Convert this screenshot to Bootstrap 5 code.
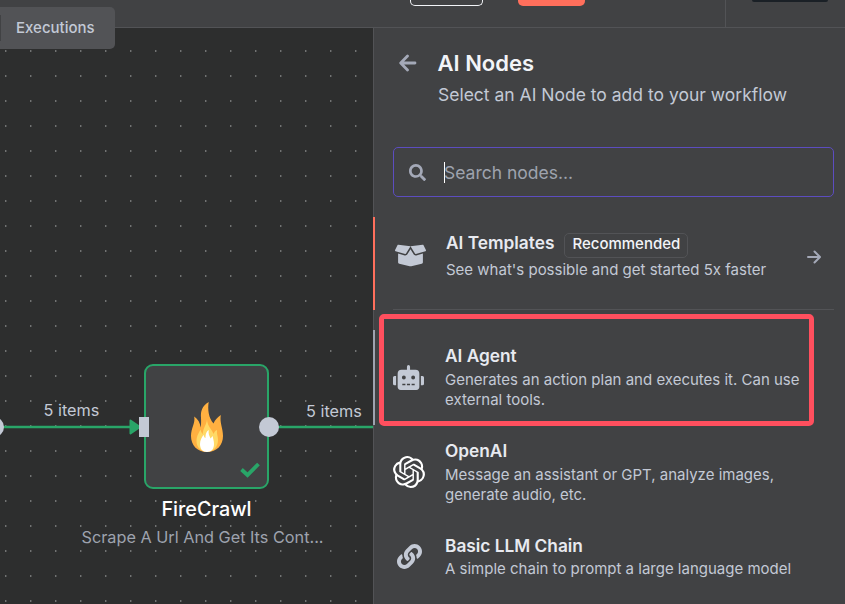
<!DOCTYPE html>
<html lang="en" data-bs-theme="dark">
<head>
<meta charset="utf-8">
<meta name="viewport" content="width=device-width, initial-scale=1">
<title>AI Nodes</title>
<link href="https://cdn.jsdelivr.net/npm/bootstrap@5.3.0/dist/css/bootstrap.min.css" rel="stylesheet">
<style>
body{width:845px;height:604px;overflow:hidden;background:#414244;color:#c3c9d5;font-family:Inter,"Liberation Sans",sans-serif;font-size:15px;line-height:20px}
svg{display:block;flex:none}
.topbar{height:28px;border-bottom:1px solid #525356;padding-left:410px}
.ghost-btn{width:73px;height:6px;border:1px solid #f2f4f8;border-top:0;border-radius:0 0 5px 5px;margin-right:35px}
.save-btn{width:67px;height:6px;background:#ff6f5c;border-radius:0 0 5px 5px;margin-right:140px}
.bar-rule{width:1px;background:#525356;margin-right:26px}
.star-btn{width:76px;height:2px;background:#1a2026;border-radius:0 0 3px 3px}
.tab-exec{left:0;top:7px;width:115px;height:42px;background:#525356;border-radius:0 5px 5px 0;padding-left:16px;font-size:15px;font-weight:500;z-index:3}
.tab-exec::before{content:"";position:absolute;left:0;top:8px;width:1px;height:26px;background:#414244}
.canvas{width:373px;background:#2d2e2e}
.canvas svg{left:0;top:0}
.edge-label{font-size:16.25px;line-height:20px}
.label-in{left:43.500px;top:372px}
.label-out{left:306px;top:373px}
.node-name{left:82px;top:469px;width:249px;font-size:19.8px;font-weight:500;line-height:24px;color:#fff}
.node-sub{left:81.500px;top:499px;font-size:16.25px;line-height:20px;color:#9ea3ae;white-space:nowrap}
.panel{border-left:1px solid #525356;background:#414244}
.panel-head{padding:21px 0 0 24px;height:119px;gap:21px}
.panel-head svg{margin:5px 0 0 1px}
.head-title{font-size:22px;font-weight:600;line-height:28px;color:#f2f4f8;margin-left:-.5px}
.head-sub{font-size:17.5px;line-height:24px;margin-top:6px}
.search-box{margin:0 11px 0 19px;height:50px;border:1px solid #5c4dc0;border-radius:5px;padding-left:15px;font-size:17.5px;color:#9ea3ae}
.search-text{margin:2px 0 0 -1px}
.caret{width:1px;height:21px;background:#fff;margin-left:18px}
.tpl{height:93px;margin-top:20px;margin-left:-1px;border-left:2px solid #ff6f5c;padding:0 24px 0 20px}
.tpl-body{padding:15px 0 0 20px}
.item-title{font-size:17.3px;font-weight:600;line-height:22px;color:#e8eaf0}
.tag{height:25px;margin-top:1px;border:1px solid #525356;border-radius:5px;padding:0 7px;line-height:20px;font-weight:500;color:#f2f4f8;margin-left:10px}
.tpl-desc{line-height:20px;margin-top:2px}
.rule{height:1px;background:#525356;margin:-1px 11px 0 19px}
.entry{height:95px;padding-left:19px;gap:20px}
.entry-body{padding-top:15px}
.entry-text{margin-top:3px}
.agent{margin-top:20px;margin-left:-1px;border-left:2px solid #9ea3b0;padding-left:18px}
.chain{height:80px;gap:19px}
.chain .entry-text{margin-top:2px}
.ic-box{margin-top:26px}
.ic-next{margin-top:33px}
.ic-robot{margin:35px 1px 0 0}
.ic-openai{margin-top:31px}
.ic-link{margin:24px 4px 0 4px}
.highlight{left:379px;top:314px;width:435px;height:112px;border:5px solid #ff4f5e;border-radius:5px;z-index:4}
</style>
</head>
<body class="position-relative d-flex flex-column">
<header class="topbar d-flex flex-shrink-0">
  <div class="ghost-btn"></div><div class="save-btn"></div><div class="bar-rule"></div><div class="star-btn"></div>
</header>
<div class="tab-exec position-absolute d-flex align-items-center">Executions</div>
<div class="d-flex flex-grow-1">
  <main class="canvas position-relative flex-shrink-0 overflow-hidden">
    <svg class="position-absolute" width="373" height="576" viewBox="0 28 373 576">
      <defs><pattern id="dots" x="5" y="50" width="25" height="25" patternUnits="userSpaceOnUse"><rect width="1" height="2" fill="#717373"/><rect x="1" width="1" height="2" fill="#4a4b4b"/></pattern></defs>
      <rect y="28" width="373" height="576" fill="url(#dots)"/>
      <path d="M0 427H131M278 427H373" stroke="#29a568" stroke-width="2.5"/>
      <rect x="145" y="365" width="123" height="123" rx="8" fill="#414244" stroke="#29a568" stroke-width="2"/>
      <path d="M130.500 420.500 140 427 130.500 433.500Z" fill="#29a568" stroke="#29a568" stroke-width="2" stroke-linejoin="round"/>
      <rect x="139" y="417" width="10" height="20" fill="#c3c9d5"/>
      <circle cx="269" cy="427" r="10" fill="#c3c9d5"/><circle cx="-6" cy="427" r="10" fill="#c3c9d5"/>
      <path d="M208.700 402C202 406 200.500 411 201 418C201.200 422 201.200 425 200.500 427.500C200.300 423 198 419 194.200 416.500C195.500 423 191 428 191 436C191 445 197 452 207 452C217 452 223 445 223 436C223 428 219.500 423 220.800 415C217 417.500 215 420 213.500 423.500C208.500 418 207.500 409 208.700 402Z" fill="#ffb041"/>
      <path d="M207 419.500C206.500 425 203 428 202.700 434C201.500 433 201 431 200.500 429.500C199.500 432 196.500 435.500 196.500 441C196.500 447 200.500 451.500 207 451.500C213.500 451.500 218 447 218 440C218 436 216.500 434 217 430C215 431 214 432.500 213.500 434C212 429 207.500 427 207 419.500Z" fill="#ffd966"/>
      <path d="M208.800 430C206 431.500 205.500 435 205.500 438C204 437.500 203.800 436 203.700 434.800C202 437 200 440 200 444C200 449 202.500 452 207 452C211.500 452 214 449 214 444C214 441 213 438.500 212.700 436L210.500 438.500C209.500 436 208 433.500 208.800 430Z" fill="#fff"/>
      <path d="M241.500 469.500 247.500 475 258.500 464" fill="none" stroke="#29a568" stroke-width="3.800"/>
    </svg>
    <div class="edge-label label-in position-absolute">5 items</div>
    <div class="edge-label label-out position-absolute">5 items</div>
    <div class="node-name position-absolute text-center">FireCrawl</div>
    <div class="node-sub position-absolute">Scrape A Url And Get Its Cont...</div>
  </main>
  <aside class="panel flex-grow-1">
    <div class="panel-head d-flex">
      <svg width="18" height="18" viewBox="0 0 18 18" fill="none" stroke="#a4a9b8" stroke-width="2.800" stroke-linecap="round"><path d="M8.500 2 1.700 9 8.500 16M2 9H16" stroke-linejoin="round"/></svg>
      <div><h1 class="head-title mb-0">AI Nodes</h1><p class="head-sub mb-0">Select an AI Node to add to your workflow</p></div>
    </div>
    <div class="search-box d-flex align-items-center">
      <svg width="17" height="17" viewBox="0 0 512 512" fill="#a4a9b8"><path d="M505 442.700L405.300 343c-4.500-4.500-10.600-7-17-7H372c27.600-35.300 44-79.700 44-128C416 93.100 322.900 0 208 0S0 93.100 0 208s93.100 208 208 208c48.300 0 92.700-16.400 128-44v16.300c0 6.400 2.500 12.500 7 17l99.700 99.700c9.400 9.400 24.600 9.400 33.900 0l28.300-28.300c9.400-9.400 9.400-24.600.1-34zM208 336c-70.700 0-128-57.200-128-128 0-70.700 57.200-128 128-128 70.700 0 128 57.200 128 128 0 70.700-57.200 128-128 128z"/></svg>
      <span class="caret"></span><span class="search-text">Search nodes...</span>
    </div>
    <div class="tpl d-flex">
      <svg class="ic-box" width="31" height="25" viewBox="0 0 640 512" fill="#c3c9d5"><path d="M425.700 256c-16.900 0-32.800-9-41.400-23.400L320 126l-64.200 106.600c-8.700 14.500-24.600 23.500-41.500 23.500-4.500 0-9-.6-13.300-1.900L64 215v178c0 14.700 10 27.500 24.200 31l216.200 54.100c10.200 2.500 20.900 2.500 31 0L551.800 424c14.200-3.600 24.200-16.400 24.200-31V215l-137 39.100c-4.300 1.300-8.800 1.900-13.300 1.900zm212.600-112.200L586.800 41c-3.100-6.200-9.800-9.800-16.700-8.900L320 64l91.700 152.100c3.800 6.300 11.400 9.300 18.500 7.300l197.900-56.500c9.900-2.900 14.700-13.900 10.200-23.100zM53.200 41L1.700 143.800c-4.600 9.200.3 20.200 10.100 23l197.900 56.500c7.100 2 14.700-1 18.500-7.300L320 64 69.800 32.100c-6.900-.8-13.500 2.700-16.600 8.900z"/></svg>
      <div class="tpl-body flex-grow-1">
        <div class="d-flex"><div class="item-title">AI Templates</div><span class="tag">Recommended</span></div>
        <div class="tpl-desc">See what's possible and get started 5x faster</div>
      </div>
      <svg class="ic-next" width="14" height="14" viewBox="0 0 14 14" fill="none" stroke="#a4a9b8" stroke-width="2" stroke-linecap="round" stroke-linejoin="round"><path d="M1 7H12.500M7.500 1.500 13 7 7.500 12.500"/></svg>
    </div>
    <div class="rule"></div>
    <div class="entry agent d-flex">
      <svg class="ic-robot" width="31" height="25" viewBox="0 0 640 512" fill="#c3c9d5"><path d="M32,224H64V416H32A32,32,0,0,1,0,384V256A32,32,0,0,1,32,224Zm512-48V448a64,64,0,0,1-64,64H160a64,64,0,0,1-64-64V176a80,80,0,0,1,80-80H288V32a32,32,0,0,1,64,0V96H464A80,80,0,0,1,544,176ZM264,256a40,40,0,1,0-40,40A40,40,0,0,0,264,256Zm-8,128H192v32h64Zm96,0H288v32h64ZM456,256a40,40,0,1,0-40,40A40,40,0,0,0,456,256Zm-8,128H384v32h64ZM640,256V384a32,32,0,0,1-32,32H576V224h32A32,32,0,0,1,640,256Z"/></svg>
      <div class="entry-body"><div class="item-title">AI Agent</div><div class="entry-text">Generates an action plan and executes it. Can use<br>external tools.</div></div>
    </div>
    <div class="entry d-flex">
      <svg class="ic-openai" width="32" height="32" viewBox="0 0 24 24" fill="#fff"><path d="M22.2819 9.8211a5.9847 5.9847 0 0 0-.5157-4.9108 6.0462 6.0462 0 0 0-6.5098-2.9A6.0651 6.0651 0 0 0 4.9807 4.1818a5.9847 5.9847 0 0 0-3.9977 2.9 6.0462 6.0462 0 0 0 .7427 7.0966 5.98 5.98 0 0 0 .511 4.9107 6.051 6.051 0 0 0 6.5146 2.9001A5.9847 5.9847 0 0 0 13.2599 24a6.0557 6.0557 0 0 0 5.7718-4.2058 5.9894 5.9894 0 0 0 3.9977-2.9001 6.0557 6.0557 0 0 0-.7475-7.0729zm-9.022 12.6081a4.4755 4.4755 0 0 1-2.8764-1.0408l.1419-.0804 4.7783-2.7582a.7948.7948 0 0 0 .3927-.6813v-6.7369l2.02 1.1686a.071.071 0 0 1 .038.052v5.5826a4.504 4.504 0 0 1-4.4945 4.4944zm-9.6607-4.1254a4.4708 4.4708 0 0 1-.5346-3.0137l.142.0852 4.783 2.7582a.7712.7712 0 0 0 .7806 0l5.8428-3.3685v2.3324a.0804.0804 0 0 1-.0332.0615L9.74 19.9502a4.4992 4.4992 0 0 1-6.1408-1.6464zM2.3408 7.8956a4.485 4.485 0 0 1 2.3655-1.9728V11.6a.7664.7664 0 0 0 .3879.6765l5.8144 3.3543-2.0201 1.1685a.0757.0757 0 0 1-.071 0l-4.8303-2.7865A4.504 4.504 0 0 1 2.3408 7.872zm16.5963 3.8558L13.1038 8.364 15.1192 7.2a.0757.0757 0 0 1 .071 0l4.8303 2.7913a4.4944 4.4944 0 0 1-.6765 8.1042v-5.6772a.79.79 0 0 0-.407-.667zm2.0107-3.0231l-.142-.0852-4.7735-2.7818a.7759.7759 0 0 0-.7854 0L9.409 9.2297V6.8974a.0662.0662 0 0 1 .0284-.0615l4.8303-2.7866a4.4992 4.4992 0 0 1 6.6802 4.66zM8.3065 12.863l-2.02-1.1638a.0804.0804 0 0 1-.038-.0567V6.0742a4.4992 4.4992 0 0 1 7.3757-3.4537l-.142.0805L8.704 5.459a.7948.7948 0 0 0-.3927.6813zm1.0976-2.3654l2.602-1.4998 2.6069 1.4998v2.9994l-2.5974 1.4997-2.6067-1.4997Z"/></svg>
      <div class="entry-body"><div class="item-title">OpenAI</div><div class="entry-text">Message an assistant or GPT, analyze images,<br>generate audio, etc.</div></div>
    </div>
    <div class="entry chain d-flex">
      <svg class="ic-link" width="25" height="25" viewBox="0 0 512 512" fill="#c3c9d5"><path d="M326.612 185.391c59.747 59.809 58.927 155.698.36 214.590-.11.12-.24.25-.36.37l-67.200 67.200c-59.270 59.270-155.699 59.262-214.960 0-59.270-59.260-59.270-155.700 0-214.960l37.106-37.106c9.840-9.840 26.786-3.300 27.294 10.606.648 17.722 3.826 35.527 9.690 52.721 1.986 5.822.567 12.262-3.783 16.612l-13.087 13.087c-28.026 28.026-28.905 73.660-1.155 101.960 28.024 28.579 74.086 28.749 102.325.51l67.200-67.190c28.191-28.191 28.073-73.757 0-101.830-3.701-3.694-7.429-6.564-10.341-8.569a16.037 16.037 0 0 1-6.947-12.606c-.396-10.567 3.348-21.456 11.698-29.806l21.054-21.055c5.521-5.521 14.182-6.199 20.584-1.731a152.482 152.482 0 0 1 20.522 17.197zM467.547 44.449c-59.261-59.262-155.690-59.270-214.960 0l-67.200 67.200c-.12.12-.25.25-.36.37-58.566 58.892-59.387 154.781.36 214.590a152.454 152.454 0 0 0 20.521 17.196c6.402 4.468 15.064 3.789 20.584-1.731l21.054-21.055c8.350-8.350 12.094-19.239 11.698-29.806a16.037 16.037 0 0 0-6.947-12.606c-2.912-2.005-6.640-4.875-10.341-8.569-28.073-28.073-28.191-73.639 0-101.830l67.200-67.190c28.239-28.239 74.300-28.069 102.325.51 27.750 28.300 26.872 73.934-1.155 101.960l-13.087 13.087c-4.350 4.350-5.769 10.790-3.783 16.612 5.864 17.194 9.042 34.999 9.690 52.721.509 13.906 17.454 20.446 27.294 10.606l37.106-37.106c59.271-59.259 59.271-155.699.001-214.959z"/></svg>
      <div class="entry-body"><div class="item-title">Basic LLM Chain</div><div class="entry-text">A simple chain to prompt a large language model</div></div>
    </div>
  </aside>
</div>
<div class="highlight position-absolute"></div>
<script src="https://cdn.jsdelivr.net/npm/bootstrap@5.3.0/dist/js/bootstrap.bundle.min.js"></script>
</body>
</html>
